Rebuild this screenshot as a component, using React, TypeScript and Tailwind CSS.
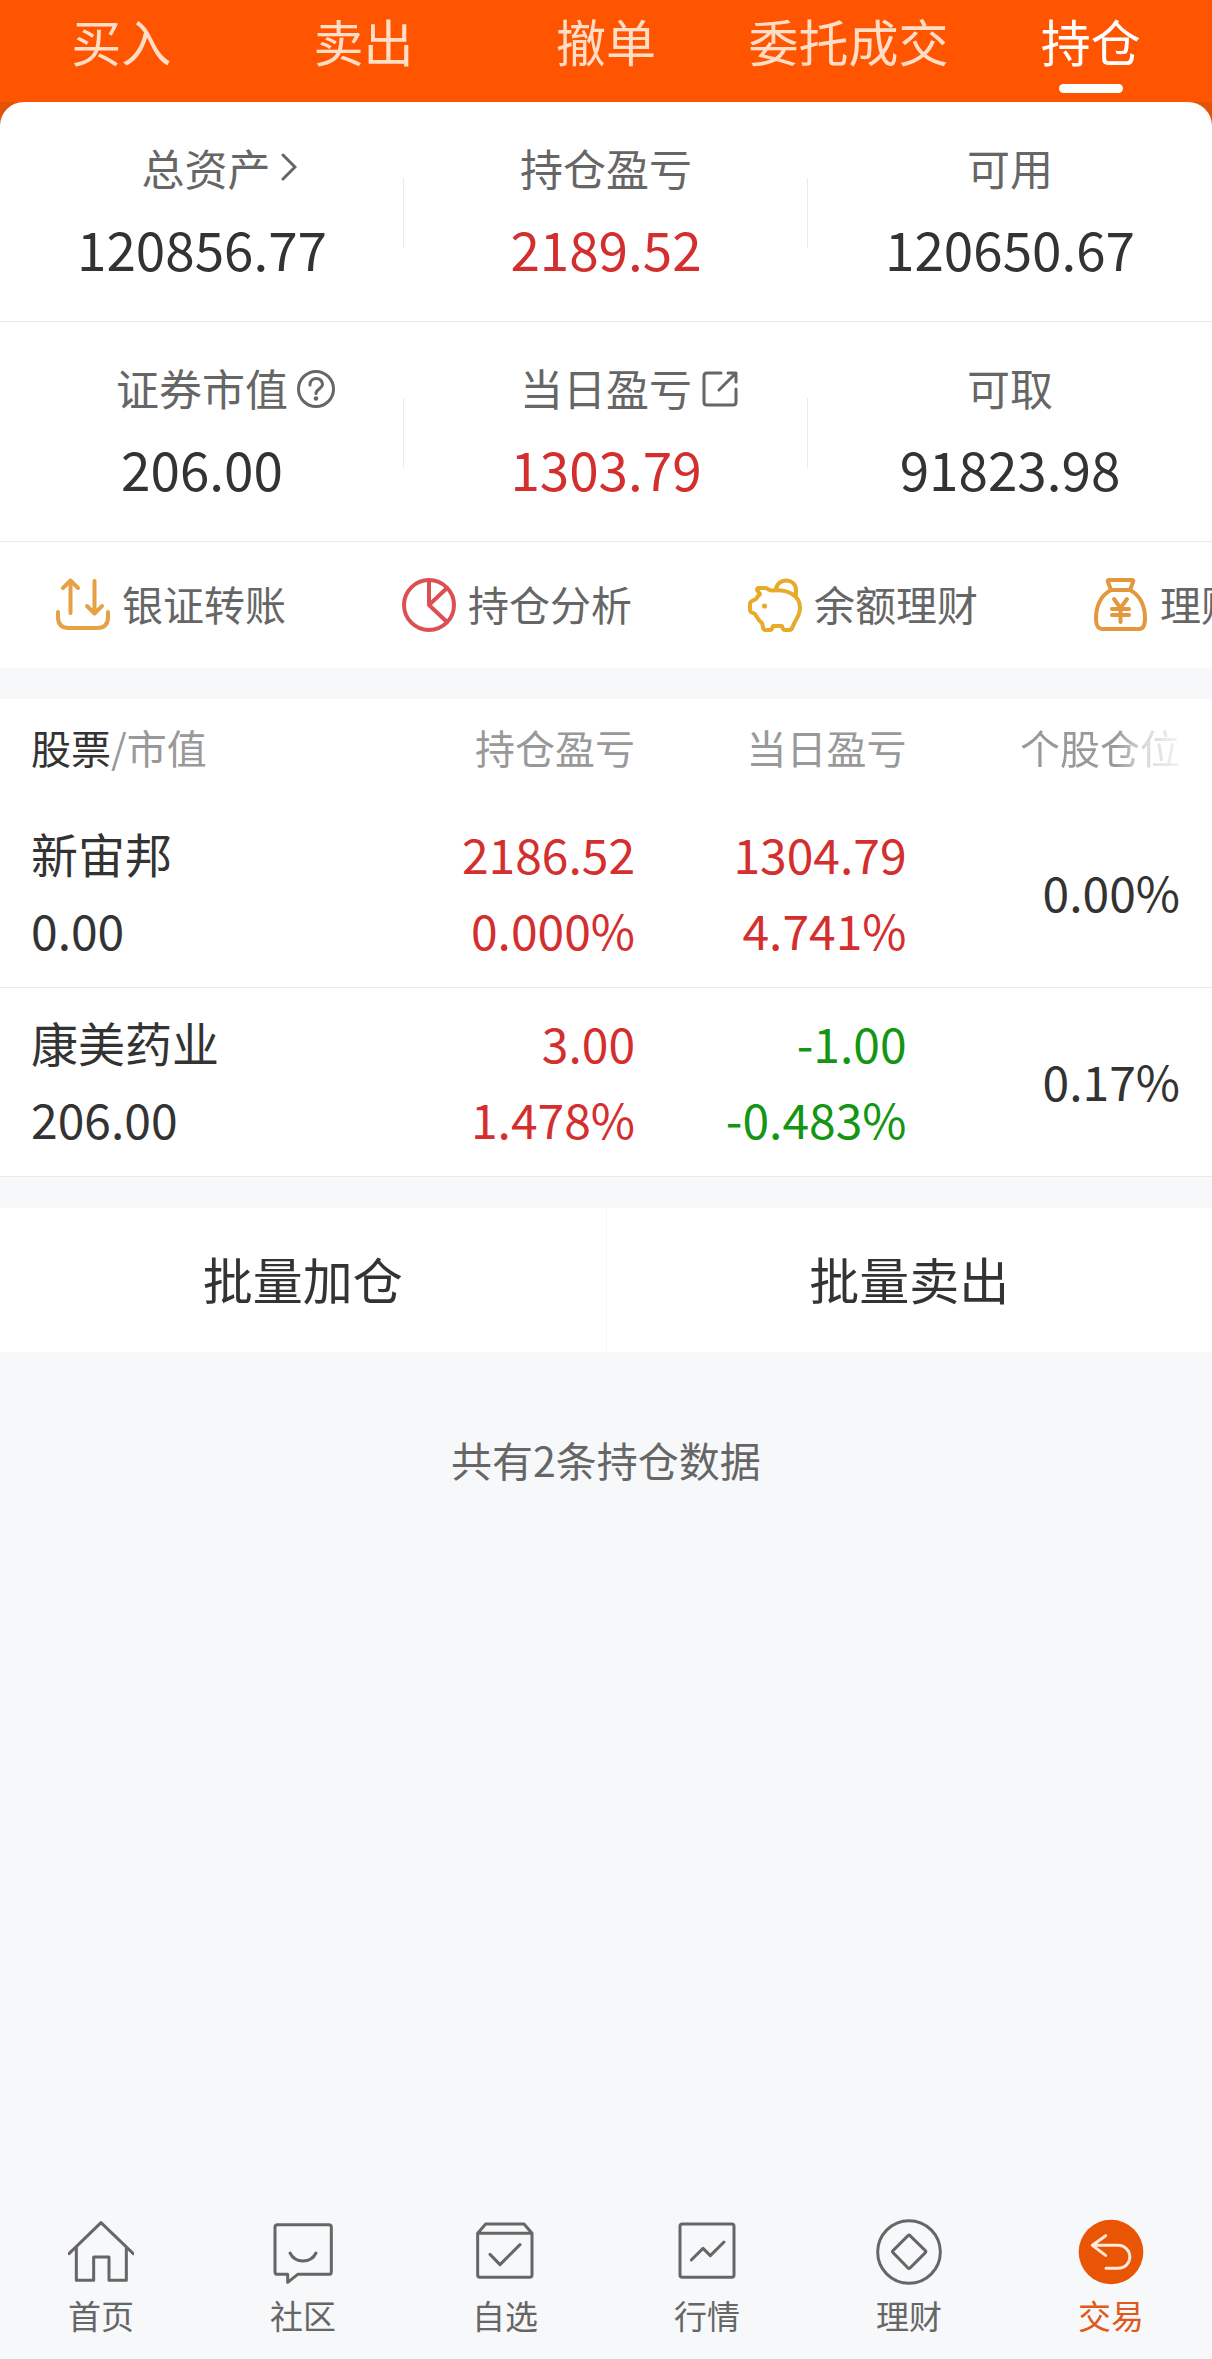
import type { ReactNode } from 'react';

const tabs = ['买入', '卖出', '撤单', '委托成交', '持仓'];

const ChevronIcon = () => (
  <svg viewBox="0 0 16 28" className="ml-[10px] -mr-[34px] h-7 w-4 shrink-0" fill="none" stroke="currentColor" strokeWidth="3" strokeLinecap="round">
    <path d="M2 2L14 14L2 26" />
  </svg>
);

const HelpIcon = () => (
  <svg viewBox="0 0 38 38" className="mt-1 ml-[9px] -mr-[47px] h-[38px] w-[38px] shrink-0" fill="none" stroke="currentColor" strokeWidth="3" strokeLinecap="round">
    <circle cx="19" cy="19" r="17.5" />
    <path d="M13 15C13 6.500 25.500 6.500 25.500 14.500C25.500 18.500 19 19 19 23.500" />
    <circle cx="19" cy="28.500" r="2.300" fill="currentColor" stroke="none" />
  </svg>
);

const ShareIcon = () => (
  <svg viewBox="0 0 38 38" className="mt-1 ml-[9px] -mr-[47px] h-[38px] w-[38px] shrink-0" fill="none" stroke="currentColor" strokeWidth="3" strokeLinecap="round" strokeLinejoin="round">
    <path d="M20 3H6Q3 3 3 6V32Q3 35 6 35H32Q35 35 35 32V19" />
    <path d="M27 3H35V12M35 3L18 20" />
  </svg>
);

const accountRows: { label: string; value: string; red?: boolean; icon?: ReactNode }[][] = [
  [
    { label: '总资产', value: '120856.77', icon: <ChevronIcon /> },
    { label: '持仓盈亏', value: '2189.52', red: true },
    { label: '可用', value: '120650.67' },
  ],
  [
    { label: '证券市值', value: '206.00', icon: <HelpIcon /> },
    { label: '当日盈亏', value: '1303.79', red: true, icon: <ShareIcon /> },
    { label: '可取', value: '91823.98' },
  ],
];

const shortcuts = [
  {
    label: '银证转账',
    color: 'text-[#e6a045]',
    icon: (
      <>
        <path d="M14.500 35V3M7 10L14.500 2.500L22 10" />
        <path d="M38.500 3V35M31 28L38.500 35.500L46 28" />
        <path d="M2 34V39Q2 50 13 50H41Q52 50 52 39V34" />
      </>
    ),
  },
  {
    label: '持仓分析',
    color: 'text-[#dc5054]',
    icon: (
      <>
        <circle cx="27" cy="27" r="25" />
        <path d="M27 2V27L45 10M27 27L45 44" />
      </>
    ),
  },
  {
    label: '余额理财',
    color: 'text-[#e8aa2a]',
    icon: (
      <>
        <path d="M9 12Q9 10 11 10H17C20 10 21 13 25 12.500C39 11 52 17 52 30C52 38 47 42 45 48Q44 52 41 52H37Q35 52 34 48H25Q24 52 22 52H18Q15 52 15 49L14 45C10 42 9 39 7 36L3 34Q2 33 2 31V26Q2 24 4 23L8 21C9 19 10 18 12 16Z" />
        <path d="M28 11C30 -1 48 0 48 12V17" />
        <circle cx="16.500" cy="28" r="2.600" fill="currentColor" stroke="none" />
      </>
    ),
  },
  {
    label: '理财',
    color: 'text-[#e3983e]',
    icon: (
      <>
        <path d="M15 2H38Q40 2 39 4L36 12C46 17 51 28 51 40C51 48 49 51 45 51H9C4 51 2 48 2 40C2 28 7 17 17 12L14 4Q13 2 15 2ZM17 12H36" />
        <path d="M20 21L26.500 30L33 21M26.500 30V44M18 31H35M18 37H35" />
      </>
    ),
  },
];

const holdings = [
  { name: '新宙邦', market: '0.00', profit: '2186.52', rate: '0.000%', day: '1304.79', dayRate: '4.741%', ratio: '0.00%', up: true },
  { name: '康美药业', market: '206.00', profit: '3.00', rate: '1.478%', day: '-1.00', dayRate: '-0.483%', ratio: '0.17%', up: false },
];

const navItems = [
  {
    label: '首页',
    icon: (
      <>
        <path d="M3 104L99 11L196 104" />
        <path d="M25 86V184H77V114H123V184H175V86" />
      </>
    ),
  },
  {
    label: '社区',
    icon: (
      <>
        <path d="M23 17H176Q184 17 184 25V158Q184 166 176 166H83L53 190V166H23Q15 166 15 158V25Q15 17 23 17Z" />
        <path d="M60 102C76 134 122 134 138 102" />
      </>
    ),
  },
  {
    label: '自选',
    icon: (
      <>
        <path d="M17 43L41 15H156L180 43V168Q180 175 173 175H24Q17 175 17 168ZM17 43H180" />
        <path d="M54 106L84 137L144 77" />
      </>
    ),
  },
  {
    label: '行情',
    icon: (
      <>
        <rect x="18" y="15" width="162" height="160" rx="7" />
        <path d="M52 123L87 88L109 110L150 69" />
      </>
    ),
  },
  {
    label: '理财',
    icon: (
      <>
        <circle cx="99" cy="99" r="94" />
        <path d="M51 95L96 50Q99 47 102 50L148 95Q151 98 148 101L102 147Q99 150 96 147L51 101Q48 98 51 95Z" />
      </>
    ),
  },
  {
    label: '交易',
    active: true,
    icon: (
      <>
        <circle cx="99" cy="99" r="97" fill="#e95504" stroke="none" />
        <path d="M83 50L43 79L83 109M43 79H121A34 34 0 0 1 121 148H84" stroke="#ffe9d9" />
      </>
    ),
  },
];

const Header = () => (
  <header className="bg-[#ff5500]">
    <nav className="flex h-[102px]">
      {tabs.map((tab) => {
        const active = tab === '持仓';
        return (
          <button key={tab} type="button" className="flex flex-1 flex-col items-center">
            <span className={`h-20 text-[50px] leading-[80px] whitespace-nowrap ${active ? 'text-white' : 'text-[#ffddc6]'}`}>{tab}</span>
            {active && <span className="mt-1 h-[9px] w-16 rounded-full bg-white" />}
          </button>
        );
      })}
    </nav>
  </header>
);

const Account = () => (
  <section className="bg-linear-to-b from-[#e15407] from-50% to-white to-50%">
    <div className="rounded-t-3xl bg-white">
      {accountRows.map((row, i) => (
        <div key={i} className="flex border-b border-[#ebebeb] pt-8 pb-[39px]">
          {row.map((item, j) => (
            <div key={item.label} className="flex flex-1">
              {j > 0 && <span className="mt-11 -ml-px h-[70px] w-px bg-[#ebebeb]" />}
              <dl className="flex-1">
                <dt className="flex h-[66px] items-center justify-center text-[43px] leading-[66px] text-[#666666]">
                  {item.label}
                  {item.icon}
                </dt>
                <dd className={`mt-[14px] text-center text-[53px] leading-[68px] ${item.red ? 'text-[#d32f2f]' : 'text-[#333333]'}`}>{item.value}</dd>
              </dl>
            </div>
          ))}
        </div>
      ))}
    </div>
  </section>
);

const Shortcuts = () => (
  <section className="flex h-[126px] items-center overflow-hidden bg-white pb-1 pl-14">
    {shortcuts.map((item) => (
      <a key={item.label} href="#" className="flex w-[346px] shrink-0 items-center gap-3">
        <svg viewBox="0 0 54 54" className={`mt-1 h-[54px] w-[54px] ${item.color}`} fill="none" stroke="currentColor" strokeWidth="4" strokeLinecap="round" strokeLinejoin="round">
          {item.icon}
        </svg>
        <span className="text-[41px] leading-[60px] text-[#666666]">{item.label}</span>
      </a>
    ))}
  </section>
);

const Holdings = () => (
  <table className="mt-[31px] w-full table-fixed bg-white text-right text-[48px] leading-[76px] text-[#333333]">
    <thead>
      <tr className="h-[100px] text-[40px] leading-[60px] text-[#999999]">
        <th className="w-[30%] pb-1 pl-[31px] text-left font-normal">
          <span className="text-[#333333]">股票</span>/市值
        </th>
        <th className="w-[22.4%] pb-1 font-normal">持仓盈亏</th>
        <th className="w-[22.4%] pb-1 font-normal">当日盈亏</th>
        <th className="pr-8 pb-1 font-normal">
          <span className="[mask-image:linear-gradient(to_right,#000_60%,rgba(0,0,0,0.4)_76%,rgba(0,0,0,0.12))]">个股仓位</span>
        </th>
      </tr>
    </thead>
    <tbody>
      {holdings.map((h) => (
        <tr key={h.name} className="border-b border-[#ebebeb]">
          <td className="pt-4 pb-5 pl-[31px] text-left">
            <div className="text-[47px]">{h.name}</div>
            <div>{h.market}</div>
          </td>
          <td className="pt-4 pb-5 text-[#d32f2f]">
            <div>{h.profit}</div>
            <div>{h.rate}</div>
          </td>
          <td className={`pt-4 pb-5 ${h.up ? 'text-[#d32f2f]' : 'text-[#149614]'}`}>
            <div>{h.day}</div>
            <div>{h.dayRate}</div>
          </td>
          <td className="pt-4 pr-8 pb-5">{h.ratio}</td>
        </tr>
      ))}
    </tbody>
  </table>
);

const BottomNav = () => (
  <nav className="mt-auto flex pb-6">
    {navItems.map((item) => (
      <a key={item.label} href="#" className={`flex flex-1 flex-col items-center gap-[10px] ${item.active ? 'text-[#e0591a]' : 'text-[#666666]'}`}>
        <svg viewBox="0 0 198 198" className="h-[66px] w-[66px]" fill="none" stroke="currentColor" strokeWidth="9" strokeLinecap="round" strokeLinejoin="round">
          {item.icon}
        </svg>
        <span className="text-[33px] leading-10">{item.label}</span>
      </a>
    ))}
  </nav>
);

const App = () => {
  return (
    <div className="flex min-h-screen flex-col bg-[#f7f8fa] font-['Noto_Sans_CJK_SC',sans-serif]">
      <Header />
      <Account />
      <Shortcuts />
      <Holdings />
      <div className="mt-[31px] flex bg-white text-[50px] leading-[140px] text-[#333333]">
        <button type="button" className="flex-1 border-r border-[#f5f5f5] pb-1">批量加仓</button>
        <button type="button" className="flex-1 pb-1">批量卖出</button>
      </div>
      <p className="mt-[77px] text-center text-[41px] leading-[60px] text-[#666666]">共有2条持仓数据</p>
      <BottomNav />
    </div>
  );
};

export default App;
